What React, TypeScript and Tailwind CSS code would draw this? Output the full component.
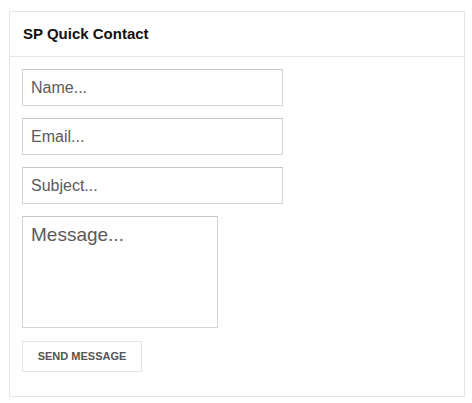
import React from 'react';

const inputClass =
  'block w-[261px] h-[37px] border border-[#d4d4d4] border-t-[#c6c6c6] bg-white px-[8px] text-[16px] text-[#555] placeholder:text-[#5a5a5a] outline-none';

const App: React.FC = () => {
  return (
    <div className="min-h-screen bg-white pt-[11px] pl-[9px]" style={{ fontFamily: '"Liberation Sans", Arial, sans-serif' }}>
      <div className="w-[456px] border border-[#e3e3e3] bg-white">
        <div className="h-[45px] border-b border-[#e6e6e6] flex items-center px-[13px]">
          <h3 className="text-[15px] font-bold text-[#111]">SP Quick Contact</h3>
        </div>
        <form className="flex flex-col items-start gap-[12px] px-[12px] pt-[12px] pb-[24px]" onSubmit={(e) => e.preventDefault()}>
          <input type="text" placeholder="Name..." className={inputClass} />
          <input type="email" placeholder="Email..." className={inputClass} />
          <input type="text" placeholder="Subject..." className={inputClass} />
          <textarea
            placeholder="Message..."
            className="block w-[196px] h-[112px] resize-none border border-[#d4d4d4] border-t-[#c6c6c6] bg-white px-[8px] pt-[7px] text-[19px] leading-[1.2] text-[#555] placeholder:text-[#5a5a5a] outline-none"
          />
          <button
            type="submit"
            className="mt-[1px] w-[120px] h-[31px] border border-[#e2e2e2] bg-white text-[11px] font-bold uppercase text-[#555]"
          >
            Send Message
          </button>
        </form>
      </div>
    </div>
  );
};

export default App;
